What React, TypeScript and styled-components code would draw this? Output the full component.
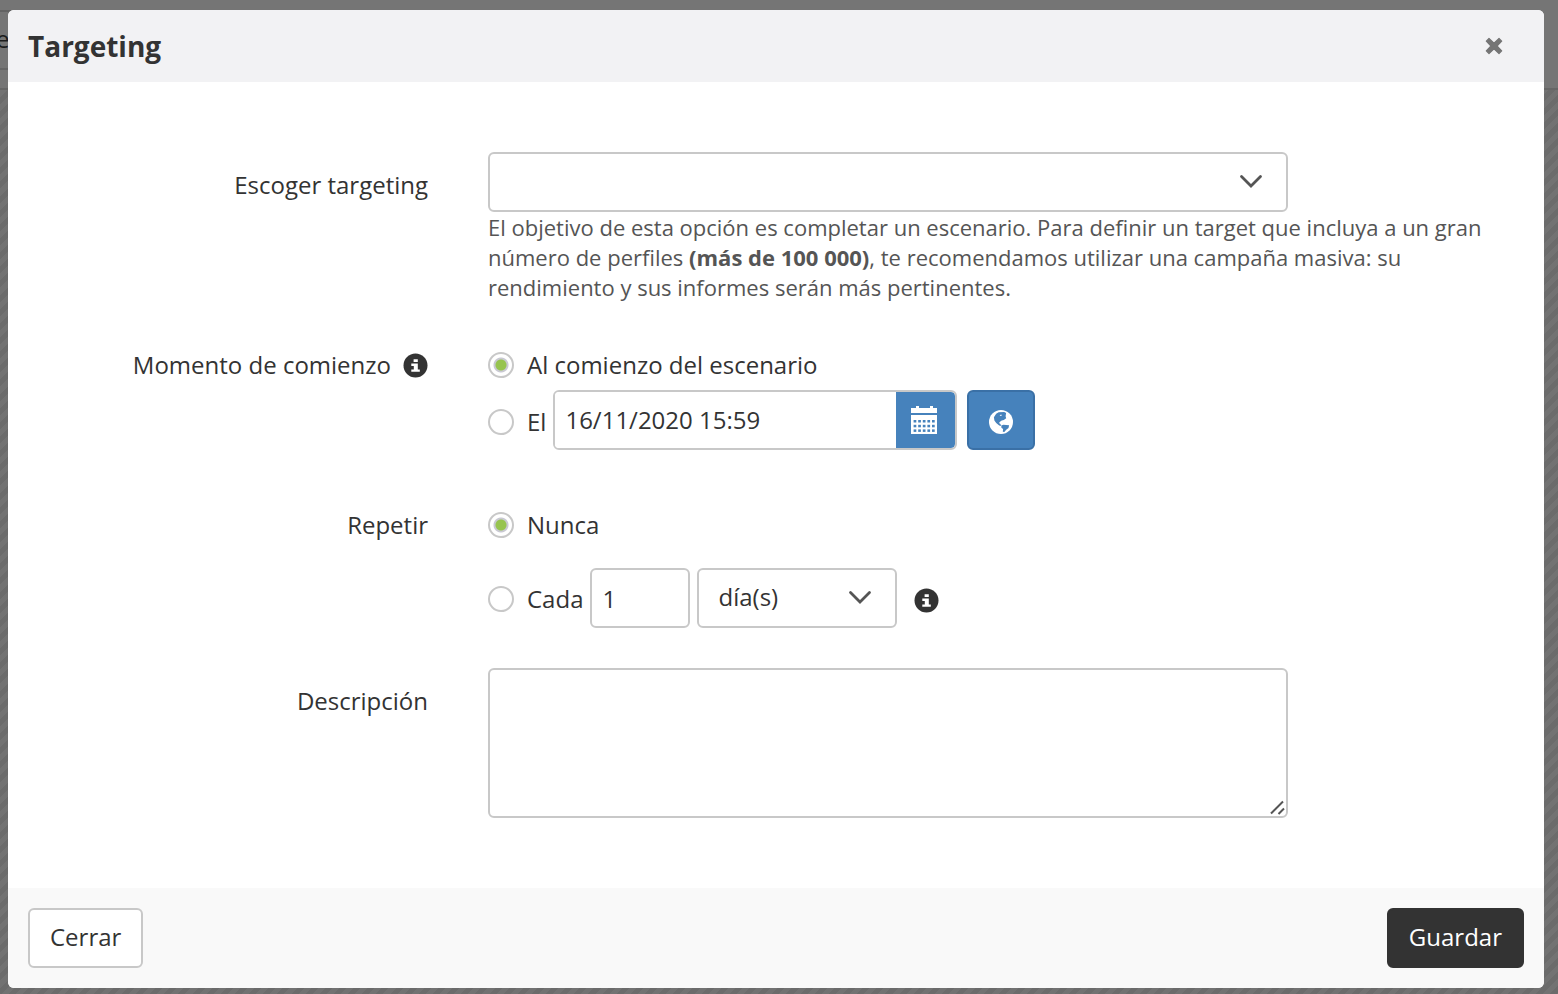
import React from "react";
import styled, { createGlobalStyle, css } from "styled-components";

const colors = {
  text: "#333333",
  help: "#555555",
  border: "#c8c8c8",
  blue: "#4682bc",
  blueDark: "#3a70a6",
  green: "#97c450",
};

const GlobalStyle = createGlobalStyle`
  *, *::before, *::after { box-sizing: border-box; }
  body {
    margin: 0;
    background: #717171;
    color: ${colors.text};
    font-family: "Open Sans", "Noto Sans", sans-serif;
    font-size: 24px;
    line-height: 34px;
  }
  button, input, select, textarea { font: inherit; color: inherit; margin: 0; }
`;

const Page = styled.div`
  position: relative;
  min-height: 100vh;
  padding: 10px 14px 6px 8px;
`;

const Underlay = styled.div`
  position: absolute;
  inset: 0;
  overflow: hidden;
  display: flex;
  flex-direction: column;
  background: #757575;
`;

const UnderlayBar = styled.div`
  width: 50%;
  height: 12px;
  border-bottom: 2px solid #636363;
`;

const UnderlayTitle = styled.div`
  width: 50%;
  height: 58px;
  padding-top: 10px;
  border-bottom: 2px solid #666666;
  color: #1c1c1c;
  text-indent: -4px;
`;

const UnderlayTools = styled.div`
  height: 20px;
  border-bottom: 2px solid #666666;
`;

const UnderlayCanvas = styled.div`
  flex: 1;
  background: repeating-linear-gradient(135deg, #727272 0 5px, #6b6b6b 5px 10px);
`;

const Dialog = styled.section`
  position: relative;
  display: flex;
  flex-direction: column;
  border-radius: 6px;
  overflow: hidden;
  background: #ffffff;
`;

const Header = styled.header`
  display: flex;
  align-items: center;
  justify-content: space-between;
  height: 72px;
  padding: 0 37px 1px 20px;
  background: #f2f2f4;
`;

const Title = styled.h1`
  margin: 0;
  font-size: 28px;
  line-height: 40px;
  font-weight: 700;
`;

const CloseButton = styled.button`
  display: flex;
  padding: 4px;
  border: 0;
  background: none;
  cursor: pointer;
`;

const Form = styled.form`
  display: flex;
  flex-direction: column;
`;

const Body = styled.div`
  padding: 70px 40px 70px 20px;
`;

const Row = styled.div<{ $after?: number }>`
  display: grid;
  grid-template-columns: 400px minmax(0, 1fr);
  column-gap: 60px;
  margin-bottom: ${(p) => p.$after ?? 0}px;
`;

const labelStyle = css`
  display: flex;
  align-items: center;
  justify-content: flex-end;
  align-self: start;
  gap: 12px;
  padding-top: 16px;
`;

const FieldLabel = styled.label`
  ${labelStyle}
`;

const GroupLabel = styled.div`
  ${labelStyle}
`;

const Field = styled.div`
  min-width: 0;
`;

const controlBox = css`
  border: 2px solid ${colors.border};
  border-radius: 6px;
  background: #ffffff;
  outline: none;
`;

const SelectWrap = styled.div<{ $width: number }>`
  position: relative;
  width: ${(p) => p.$width}px;
  max-width: 100%;
`;

const Select = styled.select`
  ${controlBox}
  display: block;
  appearance: none;
  width: 100%;
  height: 60px;
  padding: 0 48px 2px 19px;
`;

const Chevron = styled.svg`
  position: absolute;
  right: 25px;
  top: 22px;
  pointer-events: none;
`;

const Help = styled.p`
  margin: 0;
  font-size: 22px;
  line-height: 30px;
  color: ${colors.help};
`;

const Options = styled.div<{ $gap: number }>`
  display: flex;
  flex-direction: column;
  gap: ${(p) => p.$gap}px;
  padding-top: 16px;
`;

const Inline = styled.div`
  display: flex;
  align-items: center;
  gap: 7px;
`;

const RadioLabel = styled.label<{ $drop?: number }>`
  display: flex;
  align-items: center;
  gap: 13px;
  padding-top: ${(p) => p.$drop ?? 0}px;
`;

const Radio = styled.input`
  appearance: none;
  flex: none;
  width: 26px;
  height: 26px;
  border: 2px solid ${colors.border};
  border-radius: 50%;
  background: #ffffff;
  &:checked {
    background: radial-gradient(circle, ${colors.green} 5px, #c9c9d2 6px, #c9c9d2 7px, #ffffff 8px);
  }
`;

const DateGroup = styled.div`
  ${controlBox}
  display: flex;
  width: 404px;
  height: 60px;
  overflow: hidden;
`;

const DateInput = styled.input`
  flex: 1;
  min-width: 0;
  padding: 0 10px;
  border: 0;
  outline: none;
`;

const CalendarButton = styled.button`
  display: flex;
  align-items: center;
  justify-content: center;
  width: 59px;
  padding: 0 3px 0 0;
  border: 0;
  border-radius: 0 4px 4px 0;
  background: ${colors.blue};
`;

const ZoneButton = styled.button`
  display: flex;
  align-items: center;
  justify-content: center;
  width: 68px;
  height: 60px;
  margin-left: 3px;
  padding: 4px 0 0;
  border: 2px solid ${colors.blueDark};
  border-radius: 6px;
  background: ${colors.blue};
`;

const CountInput = styled.input`
  ${controlBox}
  width: 100px;
  height: 60px;
  padding: 0 10px;
`;

const HintSlot = styled.span`
  display: flex;
  padding: 4px 0 0 10px;
`;

const TextAreaWrap = styled.div`
  position: relative;
  width: 800px;
  max-width: 100%;
`;

const TextArea = styled.textarea`
  ${controlBox}
  display: block;
  width: 100%;
  height: 150px;
  padding: 10px;
  resize: none;
`;

const Grip = styled.svg`
  position: absolute;
  right: 1px;
  bottom: 2px;
  pointer-events: none;
`;

const Footer = styled.footer`
  display: flex;
  align-items: center;
  justify-content: space-between;
  height: 100px;
  padding: 0 20px;
  background: #f9f9f9;
`;

const Button = styled.button<{ $primary?: boolean }>`
  height: 60px;
  padding: 0 20px 2px;
  border: 2px solid ${(p) => (p.$primary ? colors.text : colors.border)};
  border-radius: 6px;
  background: ${(p) => (p.$primary ? colors.text : "#ffffff")};
  color: ${(p) => (p.$primary ? "#ffffff" : colors.text)};
  cursor: pointer;
`;

const ChevronIcon = () => (
  <Chevron width="24" height="16" viewBox="0 0 24 16" aria-hidden="true">
    <path d="M2.5 2.5L12 12L21.5 2.5" fill="none" stroke="#555555" strokeWidth="2.8" strokeLinecap="round" />
  </Chevron>
);

const InfoIcon = () => (
  <svg width="25" height="25" viewBox="0 0 25 25" role="img" aria-label="Info">
    <circle cx="12.5" cy="12.5" r="12" fill={colors.text} />
    <path d="M10.6 6.2h4.2v2.7h-4.2zM8.3 10.6h6.5v5.9h2v2.3H8.3v-2.3h2.5v-3.6H8.3z" fill="#ffffff" />
  </svg>
);

const CloseIcon = () => (
  <svg width="18" height="18" viewBox="0 0 18 18" aria-hidden="true">
    <path
      d="M4 1.5L9 6.1L14 1.5L16.7 4.2L12 9L16.7 13.8L14 16.5L9 11.9L4 16.5L1.3 13.8L6 9L1.3 4.2Z"
      fill="#757575"
      stroke="#757575"
      strokeWidth="1.2"
      strokeLinejoin="round"
    />
  </svg>
);

const CalendarIcon = () => (
  <svg width="26" height="28" viewBox="0 0 26 28" aria-hidden="true">
    <path d="M0 2h5V0h3v2h11V0h3v2h4v5H0z" fill="#ffffff" />
    <path d="M0 9h26v19H0z" fill="#ffffff" />
    <g fill={colors.blue}>
      {[14, 18.8, 23.4].map((y) =>
        [2.6, 7.2, 11.8, 16.4, 21].map((x) => <rect key={`${x}-${y}`} x={x} y={y} width="2.7" height="2.5" />)
      )}
    </g>
  </svg>
);

const GlobeIcon = () => (
  <svg width="24" height="24" viewBox="0 0 24 24" aria-hidden="true">
    <circle cx="12" cy="12" r="12" fill="#ffffff" />
    <g fill={colors.blue}>
      <path d="M7.2 3.7L9.6 2.2L15.2 1.9L17.1 3.1L16.6 6.2L17.2 8.2L14.8 9.9L12.7 10.4L11 11.8L10 13L11.4 14L12.2 15.9L10.2 15.4L7.2 13.1L5.4 10.5L4.9 7.2Z" />
      <path d="M12.3 15.6L14.4 14.8L20.1 15.2L19.5 17.9L17.2 19.8L15.3 22L13.8 21.7L14.1 19L12.4 17.8Z" />
    </g>
    <path d="M10.6 5.2L12.2 4.6L12.9 5.4L11.8 6.1Z" fill="#ffffff" />
  </svg>
);

export default function App() {
  return (
    <>
      <GlobalStyle />
      <Page>
        <Underlay aria-hidden="true">
          <UnderlayBar />
          <UnderlayTitle>e</UnderlayTitle>
          <UnderlayTools />
          <UnderlayCanvas />
        </Underlay>
        <Dialog role="dialog" aria-labelledby="dialog-title">
          <Header>
            <Title id="dialog-title">Targeting</Title>
            <CloseButton type="button" aria-label="Cerrar">
              <CloseIcon />
            </CloseButton>
          </Header>
          <Form onSubmit={(e) => e.preventDefault()}>
            <Body>
              <Row $after={30}>
                <FieldLabel htmlFor="target">Escoger targeting</FieldLabel>
                <Field>
                  <SelectWrap $width={800}>
                    <Select id="target" defaultValue="">
                      <option value="" />
                    </Select>
                    <ChevronIcon />
                  </SelectWrap>
                  <Help>
                    El objetivo de esta opción es completar un escenario. Para definir un target que incluya a un gran
                    número de perfiles <strong>(más de 100 000)</strong>, te recomendamos utilizar una campaña masiva: su
                    rendimiento y sus informes serán más pertinentes.
                  </Help>
                </Field>
              </Row>

              <Row $after={42} role="radiogroup" aria-labelledby="start-label">
                <GroupLabel id="start-label">
                  Momento de comienzo
                  <InfoIcon />
                </GroupLabel>
                <Options $gap={8}>
                  <RadioLabel>
                    <Radio type="radio" name="start" value="begin" defaultChecked />
                    Al comienzo del escenario
                  </RadioLabel>
                  <Inline>
                    <RadioLabel $drop={4}>
                      <Radio type="radio" name="start" value="date" />
                      El
                    </RadioLabel>
                    <DateGroup>
                      <DateInput type="text" aria-label="Fecha" defaultValue="16/11/2020 15:59" />
                      <CalendarButton type="button" aria-label="Calendario">
                        <CalendarIcon />
                      </CalendarButton>
                    </DateGroup>
                    <ZoneButton type="button" aria-label="Zona horaria">
                      <GlobeIcon />
                    </ZoneButton>
                  </Inline>
                </Options>
              </Row>

              <Row $after={40} role="radiogroup" aria-labelledby="repeat-label">
                <GroupLabel id="repeat-label">Repetir</GroupLabel>
                <Options $gap={26}>
                  <RadioLabel>
                    <Radio type="radio" name="repeat" value="never" defaultChecked />
                    Nunca
                  </RadioLabel>
                  <Inline>
                    <RadioLabel $drop={2}>
                      <Radio type="radio" name="repeat" value="every" />
                      Cada
                    </RadioLabel>
                    <CountInput type="text" aria-label="Cantidad" defaultValue="1" />
                    <SelectWrap $width={200}>
                      <Select aria-label="Unidad" defaultValue="day">
                        <option value="day">día(s)</option>
                      </Select>
                      <ChevronIcon />
                    </SelectWrap>
                    <HintSlot>
                      <InfoIcon />
                    </HintSlot>
                  </Inline>
                </Options>
              </Row>

              <Row>
                <FieldLabel htmlFor="description">Descripción</FieldLabel>
                <TextAreaWrap>
                  <TextArea id="description" />
                  <Grip width="18" height="18" viewBox="0 0 18 18" aria-hidden="true">
                    <path d="M2 15.5L14 3.5M9.5 16L15 10.5" stroke="#555555" strokeWidth="2" />
                  </Grip>
                </TextAreaWrap>
              </Row>
            </Body>
            <Footer>
              <Button type="button">Cerrar</Button>
              <Button type="submit" $primary>
                Guardar
              </Button>
            </Footer>
          </Form>
        </Dialog>
      </Page>
    </>
  );
}
